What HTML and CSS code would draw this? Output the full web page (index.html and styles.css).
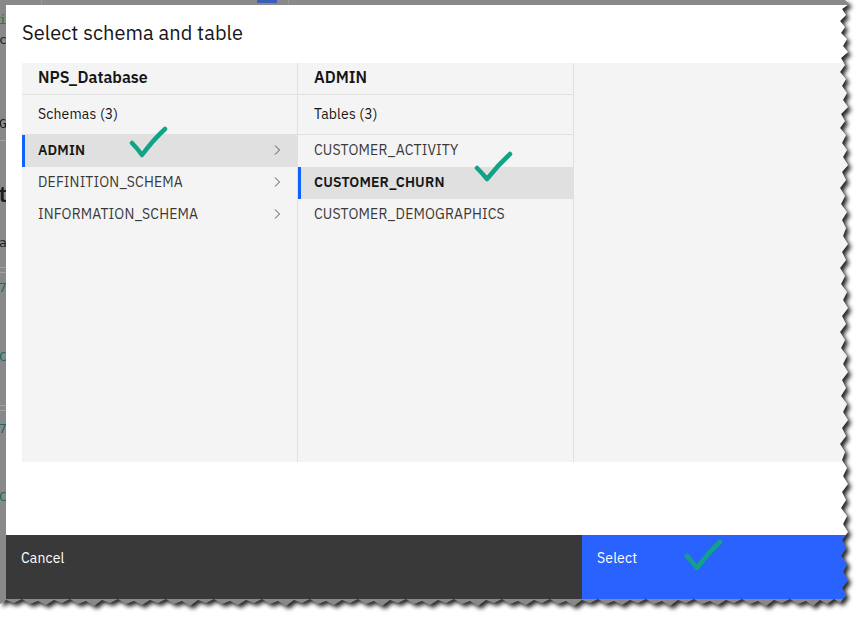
FILE: index.html
```html
<!DOCTYPE html>
<html lang="en">
<head>
<meta charset="utf-8">
<title>Select schema and table</title>
<link rel="stylesheet" href="styles.css">
</head>
<body>
<div class="frame">
  <div class="shot">
    <div class="behind">
      <div class="topbar">
        <span class="tb-line l1"></span>
        <span class="tb-blue"></span>
        <span class="tb-line l2"></span>
      </div>
      <div class="bg-lines">
        <div class="bgl g h20">i</div>
        <div class="bgl h84">c</div>
        <div class="bgl h24">G</div>
        <div class="bgl rule h43"></div>
        <div class="bgl big h52">t</div>
        <div class="bgl h32">a</div>
        <div class="bgl rule2 m8"></div>
        <div class="bgl teal h69">7</div>
        <div class="bgl teal h56">C</div>
        <div class="bgl rule2 m10"></div>
        <div class="bgl teal h68">7</div>
        <div class="bgl teal h40">C</div>
      </div>
    </div>

    <div class="modal">
      <h1 class="title">Select schema and table</h1>
      <div class="panel">
        <div class="col">
          <div class="col-head">NPS_Database</div>
          <div class="col-sub">Schemas (3)</div>
          <ul class="list">
            <li class="item selected"><span>ADMIN</span><svg class="chev" viewBox="0 0 16 16"><path d="M6 3.5 L10.5 8 L6 12.5"/></svg></li>
            <li class="item"><span>DEFINITION_SCHEMA</span><svg class="chev" viewBox="0 0 16 16"><path d="M6 3.5 L10.5 8 L6 12.5"/></svg></li>
            <li class="item"><span>INFORMATION_SCHEMA</span><svg class="chev" viewBox="0 0 16 16"><path d="M6 3.5 L10.5 8 L6 12.5"/></svg></li>
          </ul>
        </div>
        <div class="col">
          <div class="col-head">ADMIN</div>
          <div class="col-sub">Tables (3)</div>
          <ul class="list">
            <li class="item"><span>CUSTOMER_ACTIVITY</span></li>
            <li class="item selected"><span>CUSTOMER_CHURN</span></li>
            <li class="item"><span>CUSTOMER_DEMOGRAPHICS</span></li>
          </ul>
        </div>
        <div class="col last"></div>
      </div>
      <div class="spacer"></div>
      <div class="footer">
        <button class="btn cancel">Cancel</button>
        <button class="btn primary">Select</button>
      </div>
    </div>

    <svg class="tick t1" viewBox="0 0 40 34"><path d="M3 17 Q8 22 13 29 Q24 14 36 3"/></svg>
    <svg class="tick t2" viewBox="0 0 40 34"><path d="M3 17 Q8 22 13 28 Q24 14 36 3"/></svg>
    <svg class="tick t3" viewBox="0 0 40 34"><path d="M3 17 Q8 22 13 29 Q24 14 36 3"/></svg>
  </div>
</div>
</body>
</html>
```

FILE: styles.css
```css
* { box-sizing: border-box; }
html, body { margin: 0; padding: 0; }
body {
  background: #ffffff;
  width: 860px;
  height: 620px;
  overflow: hidden;
  font-family: "IBM Plex Sans", Roboto, "Liberation Sans", sans-serif;
}

.frame {
  width: 860px;
  height: 620px;
  filter: drop-shadow(3px 3px 2px rgba(0,0,0,0.85));
}

.shot {
  position: relative;
  width: 852px;
  height: 608px;
  background: #898989;
  overflow: hidden;
  clip-path: polygon(
    0 0, 845px 0, 849px 4px, 842px 9px, 846px 15px, 840px 21px, 845px 27px, 841px 33px, 847px 39px,
    843px 46px, 848px 52px, 841px 58px, 845px 65px, 840px 72px, 846px 79px, 842px 86px, 847px 93px,
    843px 100px, 848px 107px, 841px 114px, 845px 121px, 840px 128px, 846px 135px, 842px 143px,
    847px 150px, 843px 157px, 848px 165px, 842px 172px, 846px 180px, 840px 188px, 845px 196px,
    841px 204px, 847px 212px, 842px 220px, 846px 228px, 843px 236px, 848px 244px, 842px 252px,
    846px 260px, 840px 268px, 845px 276px, 841px 284px, 847px 292px, 843px 300px, 848px 308px,
    842px 316px, 846px 324px, 840px 332px, 845px 340px, 841px 348px, 847px 356px, 843px 364px,
    848px 372px, 842px 380px, 846px 388px, 841px 396px, 847px 404px, 843px 412px, 848px 420px,
    842px 428px, 846px 436px, 840px 444px, 845px 452px, 842px 460px, 847px 468px, 843px 476px,
    848px 484px, 842px 492px, 846px 500px, 841px 508px, 847px 516px, 843px 524px, 848px 532px,
    842px 540px, 846px 548px, 841px 556px, 847px 564px, 843px 572px, 848px 580px, 842px 588px,
    846px 595px,
    840px 603px, 834px 599px, 827px 604px, 820px 600px, 813px 606px, 806px 601px, 798px 604px,
    790px 599px, 782px 603px, 774px 600px, 766px 606px, 758px 601px, 750px 604px, 742px 599px,
    734px 603px, 726px 600px, 718px 605px, 710px 601px, 702px 604px, 694px 599px, 686px 603px,
    678px 600px, 670px 606px, 662px 601px, 654px 604px, 646px 599px, 638px 603px, 630px 600px,
    622px 605px, 614px 601px, 606px 604px, 598px 599px, 590px 603px, 582px 600px, 574px 606px,
    566px 601px, 558px 604px, 550px 599px, 542px 603px, 534px 600px, 526px 605px, 518px 601px,
    510px 604px, 502px 599px, 494px 603px, 486px 600px, 478px 606px, 470px 601px, 462px 604px,
    454px 599px, 446px 603px, 438px 600px, 430px 605px, 422px 601px, 414px 604px, 406px 599px,
    398px 603px, 390px 600px, 382px 606px, 374px 601px, 366px 604px, 358px 599px, 350px 603px,
    342px 600px, 334px 605px, 326px 601px, 318px 604px, 310px 599px, 302px 603px, 294px 600px,
    286px 606px, 278px 601px, 270px 604px, 262px 599px, 254px 603px, 246px 600px, 238px 605px,
    230px 601px, 222px 604px, 214px 599px, 206px 603px, 198px 600px, 190px 606px, 182px 601px,
    174px 604px, 166px 599px, 158px 603px, 150px 600px, 142px 605px, 134px 601px, 126px 604px,
    118px 599px, 110px 603px, 102px 600px, 94px 606px, 86px 601px, 78px 604px, 70px 599px,
    62px 603px, 54px 600px, 46px 605px, 38px 601px, 30px 604px, 22px 599px, 14px 603px,
    6px 600px, 0 604px
  );
}

/* page behind the dialog */
.behind {
  width: 100%;
  height: 100%;
}
.topbar {
  height: 5px;
  position: relative;
}
.tb-line {
  position: absolute;
  top: 0;
  width: 1px;
  height: 5px;
  background: #9a9a9a;
}
.tb-line.l1 { left: 41px; }
.tb-line.l2 { left: 288px; }
.tb-blue {
  position: absolute;
  top: 0;
  left: 257px;
  width: 20px;
  height: 3px;
  background: #3b5fb8;
}
.bg-lines {
  padding-top: 7px;
  font-family: "DejaVu Sans Mono", monospace;
  font-size: 13px;
  color: #1e1e1e;
}
.bgl {
  width: 6px;
  overflow: hidden;
  line-height: 16px;
  text-indent: -1px;
}
.h20 { height: 20px; }
.h24 { height: 24px; }
.h32 { height: 32px; }
.h40 { height: 40px; }
.h43 { height: 43px; }
.h52 { height: 52px; }
.h56 { height: 56px; }
.h68 { height: 68px; }
.h69 { height: 69px; }
.h84 { height: 84px; }
.bgl.g { color: #2c7a1d; }
.bgl.teal { color: #1f6a63; }
.bgl.big { font-family: "Liberation Sans", sans-serif; font-weight: 700; font-size: 22px; line-height: 24px; }
.bgl.rule { border-top: 1px solid #a0a0a0; }
.bgl.rule2 { border-top: 1px solid #a3a3a3; border-bottom: 1px solid #a3a3a3; height: 6px; }
.m8 { margin-bottom: 7px; }
.m10 { margin-bottom: 10px; }

/* dialog */
.modal {
  position: absolute;
  top: 5px;
  left: 6px;
  width: 854px;
  height: 594px;
  background: #ffffff;
  display: flex;
  flex-direction: column;
}
.title {
  margin: 14px 0 16px 16px;
  font-size: 20px;
  font-weight: 400;
  line-height: 28px;
  color: #161616;
  letter-spacing: 0.05px;
}
.panel {
  margin-left: 16px;
  height: 399px;
  background: #f4f4f4;
  display: flex;
}
.col {
  width: 276px;
  border-right: 1px solid #e0e0e0;
  display: flex;
  flex-direction: column;
}
.col.last {
  flex: 1;
  border-right: 0;
}
.col-head {
  height: 32px;
  border-bottom: 1px solid #e0e0e0;
  padding: 0 16px 4px;
  display: flex;
  align-items: center;
  font-size: 16px;
  font-weight: 600;
  color: #161616;
  letter-spacing: 0;
}
.col-sub {
  height: 40px;
  border-bottom: 1px solid #e0e0e0;
  padding: 0 16px 2px;
  display: flex;
  align-items: center;
  font-size: 14px;
  color: #161616;
  letter-spacing: 0.16px;
}
.list {
  list-style: none;
  margin: 0;
  padding: 0;
}
.item {
  height: 32px;
  padding: 0 12px 2px 16px;
  display: flex;
  align-items: center;
  justify-content: space-between;
  font-size: 14px;
  color: #393939;
  letter-spacing: 0.16px;
}
.item.selected {
  background: #e0e0e0;
  color: #161616;
  font-weight: 600;
  box-shadow: inset 3px 0 0 #0f62fe;
}
.chev {
  width: 16px;
  height: 16px;
  fill: none;
  stroke: #525252;
  stroke-width: 1;
}
.spacer { height: 73px; }
.footer {
  height: 64px;
  display: flex;
}
.btn {
  border: 0;
  margin: 0;
  font-family: inherit;
  font-size: 14px;
  letter-spacing: 0.16px;
  text-align: left;
  padding: 14px 15px 0 15px;
  line-height: 18px;
  color: #ffffff;
  display: flex;
  align-items: flex-start;
}
.btn.cancel {
  width: 576px;
  background: #393939;
}
.btn.primary {
  flex: 1;
  background: #2962fd;
}

/* hand-drawn annotation ticks */
.tick {
  position: absolute;
  width: 40px;
  height: 34px;
  fill: none;
  stroke: #12a386;
  stroke-width: 4.5;
  stroke-linecap: round;
  stroke-linejoin: round;
}
.t1 { left: 129px; top: 126px; }
.t2 { left: 474px; top: 151px; }
.t3 { left: 684px; top: 539px; }
```
